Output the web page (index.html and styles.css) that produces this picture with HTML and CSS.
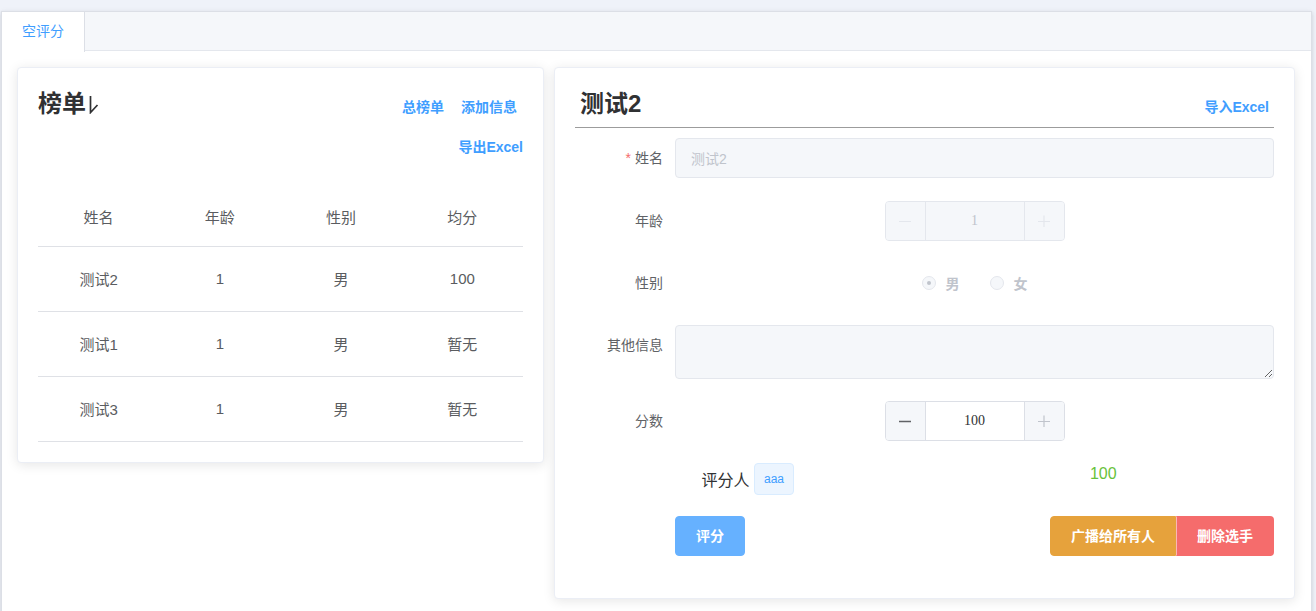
FILE: index.html
```html
<!DOCTYPE html>
<html lang="zh">
<head>
<meta charset="utf-8">
<title>空评分</title>
<link rel="stylesheet" href="styles.css">
</head>
<body>
<div class="tabs">
  <div class="tabs-header">
    <div class="tab active">空评分</div>
  </div>
  <div class="tabs-content">
    <section class="card rank">
      <div class="rank-head">
        <h2 class="title">榜单<svg class="title-mark" width="10" height="19" viewBox="0 0 10 19"><path d="M1.5 1 V17.5 L8.5 10" fill="none" stroke="#303133" stroke-width="1.7"/></svg></h2>
        <div class="rank-links">
          <div class="link-row first"><a class="link">总榜单</a><a class="link">添加信息</a></div>
          <div class="link-row"><a class="link">导出Excel</a></div>
        </div>
      </div>
      <table class="rank-table">
        <thead>
          <tr><th>姓名</th><th>年龄</th><th>性别</th><th>均分</th></tr>
        </thead>
        <tbody>
          <tr><td>测试2</td><td>1</td><td>男</td><td>100</td></tr>
          <tr><td>测试1</td><td>1</td><td>男</td><td>暂无</td></tr>
          <tr><td>测试3</td><td>1</td><td>男</td><td>暂无</td></tr>
        </tbody>
      </table>
    </section>

    <section class="card detail">
      <div class="detail-head">
        <h2 class="title">测试2</h2>
        <a class="link import">导入Excel</a>
      </div>
      <div class="form">
        <div class="form-item">
          <label class="label"><span class="req">*</span>姓名</label>
          <div class="control">
            <input class="input" value="测试2" disabled>
          </div>
        </div>
        <div class="form-item">
          <label class="label">年龄</label>
          <div class="control center">
            <div class="num disabled">
              <span class="num-btn dec"><svg width="12" height="12" viewBox="0 0 12 12"><path d="M0 6.5 H12" stroke="currentColor" stroke-width="1.2"/></svg></span>
              <span class="num-val">1</span>
              <span class="num-btn inc"><svg width="12" height="12" viewBox="0 0 12 12"><path d="M0 6.5 H12 M6 0.5 V12.5" stroke="currentColor" stroke-width="1.2"/></svg></span>
            </div>
          </div>
        </div>
        <div class="form-item">
          <label class="label">性别</label>
          <div class="control center">
            <span class="radio"><span class="radio-dot checked"><span class="radio-inner"></span></span><span class="radio-label">男</span></span>
            <span class="radio"><span class="radio-dot"></span><span class="radio-label">女</span></span>
          </div>
        </div>
        <div class="form-item tall">
          <label class="label">其他信息</label>
          <div class="control">
            <textarea class="textarea" rows="2" readonly></textarea>
          </div>
        </div>
        <div class="form-item">
          <label class="label">分数</label>
          <div class="control center">
            <div class="num">
              <span class="num-btn dec"><svg width="12" height="12" viewBox="0 0 12 12"><path d="M0 6.5 H12" stroke="currentColor" stroke-width="1.3"/></svg></span>
              <span class="num-val">100</span>
              <span class="num-btn inc off"><svg width="12" height="12" viewBox="0 0 12 12"><path d="M0 6.5 H12 M6 0.5 V12.5" stroke="currentColor" stroke-width="1.2"/></svg></span>
            </div>
          </div>
        </div>
        <div class="rater-row">
          <div class="half"><span class="rater">评分人</span> <span class="tag">aaa</span></div>
          <div class="half score">100</div>
        </div>
        <div class="actions">
          <button class="btn primary" type="button">评分</button>
          <div class="btn-group">
            <button class="btn warning" type="button">广播给所有人</button><button class="btn danger" type="button">删除选手</button>
          </div>
        </div>
      </div>
    </section>
  </div>
</div>
</body>
</html>
```

FILE: styles.css
```css
* { box-sizing: border-box; }

html, body { height: 611px; }

body {
  margin: 0;
  padding: 11px 0 0 1px;
  background: #eff2f9;
  font-family: "Liberation Sans", "Noto Sans CJK SC", sans-serif;
  color: #606266;
  overflow: hidden;
}

.tabs {
  width: 1311px;
  border: 1px solid #dcdfe6;
  background: #fff;
  box-shadow: 0 2px 4px rgba(0, 0, 0, .12), 0 0 6px rgba(0, 0, 0, .04);
}

.tabs-header {
  display: flex;
  height: 39px;
  background: #f5f7fa;
  border-bottom: 1px solid #e4e7ed;
}

.tab {
  height: 40px;
  margin-bottom: -1px;
  padding: 0 20px;
  line-height: 39px;
  font-size: 14px;
  color: #409eff;
  background: #fff;
  border-right: 1px solid #dcdfe6;
}

.tabs-content {
  display: grid;
  grid-template-columns: 527px 741px;
  column-gap: 10px;
  align-items: start;
  padding: 16px 15px 15px;
}

.card {
  background: #fff;
  border: 1px solid #ebeef5;
  border-radius: 4px;
  box-shadow: 0 2px 12px 0 rgba(0, 0, 0, .1);
  padding: 20px;
}

.title {
  margin: 0;
  font-size: 24px;
  line-height: 32px;
  font-weight: 700;
  color: #303133;
  display: flex;
  align-items: center;
}

.title-mark {
  margin-left: 3px;
  margin-top: 1px;
}

.link {
  display: inline-block;
  padding: 12px 0;
  font-size: 14px;
  line-height: 16px;
  font-weight: 600;
  color: #409eff;
  cursor: pointer;
}

/* left card */
.rank-head {
  display: flex;
  justify-content: space-between;
  align-items: flex-start;
}

.rank-links {
  display: flex;
  flex-direction: column;
  align-items: flex-end;
  margin-top: -1px;
}

.link-row {
  display: flex;
  gap: 17px;
}

.link-row.first {
  margin-right: 6px;
}

.rank-table {
  width: 100%;
  margin-top: 21px;
  border-collapse: collapse;
  table-layout: fixed;
  font-size: 15px;
  color: #5a5c60;
}

.rank-table th,
.rank-table td {
  text-align: center;
  font-weight: 400;
  padding: 0;
  border-bottom: 1px solid #dfe1e6;
}

.rank-table th { height: 58px; }
.rank-table td { height: 65px; }

/* right card */
.detail-head {
  display: flex;
  justify-content: space-between;
  align-items: flex-start;
  height: 40px;
  padding: 0 5px;
  border-bottom: 1px solid #9c9c9c;
}

.import { margin-top: -1px; }

.form { margin-top: 10px; }

.form-item {
  display: flex;
  margin-bottom: 22px;
}

.form-item:first-child { margin-bottom: 23px; }

.label {
  flex: 0 0 100px;
  padding-right: 12px;
  text-align: right;
  font-size: 14px;
  line-height: 40px;
  color: #606266;
}

.req {
  color: #f56c6c;
  margin-right: 4px;
}

.control {
  flex: 1;
  min-height: 40px;
  display: flex;
  align-items: center;
}

.control.center { justify-content: center; }

.input {
  width: 100%;
  height: 40px;
  padding: 0 15px;
  border: 1px solid #e4e7ed;
  border-radius: 4px;
  background: #f5f7fa;
  font-family: inherit;
  font-size: 14px;
  color: #c0c4cc;
  -webkit-text-fill-color: #c0c4cc;
  opacity: 1;
  outline: none;
}

.num {
  display: flex;
  width: 180px;
  height: 40px;
  border: 1px solid #dcdfe6;
  border-radius: 4px;
  background: #fff;
  overflow: hidden;
}

.num-btn {
  flex: 0 0 40px;
  display: flex;
  align-items: center;
  justify-content: center;
  background: #f5f7fa;
  color: #606266;
}

.num-btn.dec { border-right: 1px solid #dcdfe6; }
.num-btn.inc { border-left: 1px solid #dcdfe6; }
.num-btn.off { color: #c0c4cc; }

.num-val {
  flex: 1;
  text-align: center;
  font-family: "Liberation Serif", serif;
  font-size: 14px;
  line-height: 38px;
  color: #303133;
}

.num.disabled {
  border-color: #e4e7ed;
  background: #f5f7fa;
}

.num.disabled .num-btn {
  color: #e4e7ed;
  border-color: #e4e7ed;
}

.num.disabled .num-val { color: #c0c4cc; }

.radio {
  display: inline-flex;
  align-items: center;
  margin-right: 30px;
  font-size: 14px;
  font-weight: 600;
  color: #c0c4cc;
}

.radio:last-child { margin-right: 0; }

.radio-dot {
  display: flex;
  align-items: center;
  justify-content: center;
  width: 14px;
  height: 14px;
  border: 1px solid #e4e7ed;
  border-radius: 50%;
  background: #f5f7fa;
}

.radio-inner {
  width: 4px;
  height: 4px;
  border-radius: 50%;
  background: #c0c4cc;
}

.radio-label { padding-left: 10px; }

.textarea {
  display: block;
  width: 100%;
  height: 54px;
  padding: 5px 15px;
  border: 1px solid #e4e7ed;
  border-radius: 4px;
  background: #f5f7fa;
  resize: vertical;
  font-family: inherit;
  font-size: 14px;
  outline: none;
}

.rater-row {
  display: flex;
  align-items: flex-start;
  margin-bottom: 21px;
}

.half {
  width: 50%;
  text-align: center;
}

.rater {
  font-size: 16px;
  color: #303133;
  vertical-align: middle;
}

.tag {
  display: inline-block;
  height: 32px;
  padding: 0 9px;
  line-height: 30px;
  font-size: 12px;
  color: #409eff;
  background: #ecf5ff;
  border: 1px solid #d9ecff;
  border-radius: 4px;
  vertical-align: middle;
}

.half:first-child { padding-right: 4px; }

.score {
  padding-left: 8px;
  font-size: 16px;
  line-height: 22px;
  color: #67c23a;
}

.actions {
  display: flex;
  justify-content: space-between;
  margin-left: 100px;
  margin-bottom: 22px;
}

.btn {
  height: 40px;
  padding: 0 20px;
  border: 1px solid transparent;
  border-radius: 4px;
  font-family: inherit;
  font-size: 14px;
  font-weight: 600;
  line-height: 38px;
  color: #fff;
  cursor: pointer;
}

.btn.primary { background: #66b1ff; border-color: #66b1ff; }

.btn-group { display: flex; }

.btn.warning {
  background: #e6a23c;
  border-color: #e6a23c;
  border-radius: 4px 0 0 4px;
}

.btn.danger {
  background: #f56c6c;
  border-color: #f56c6c;
  border-left-color: rgba(255, 255, 255, .5);
  border-radius: 0 4px 4px 0;
}
```
